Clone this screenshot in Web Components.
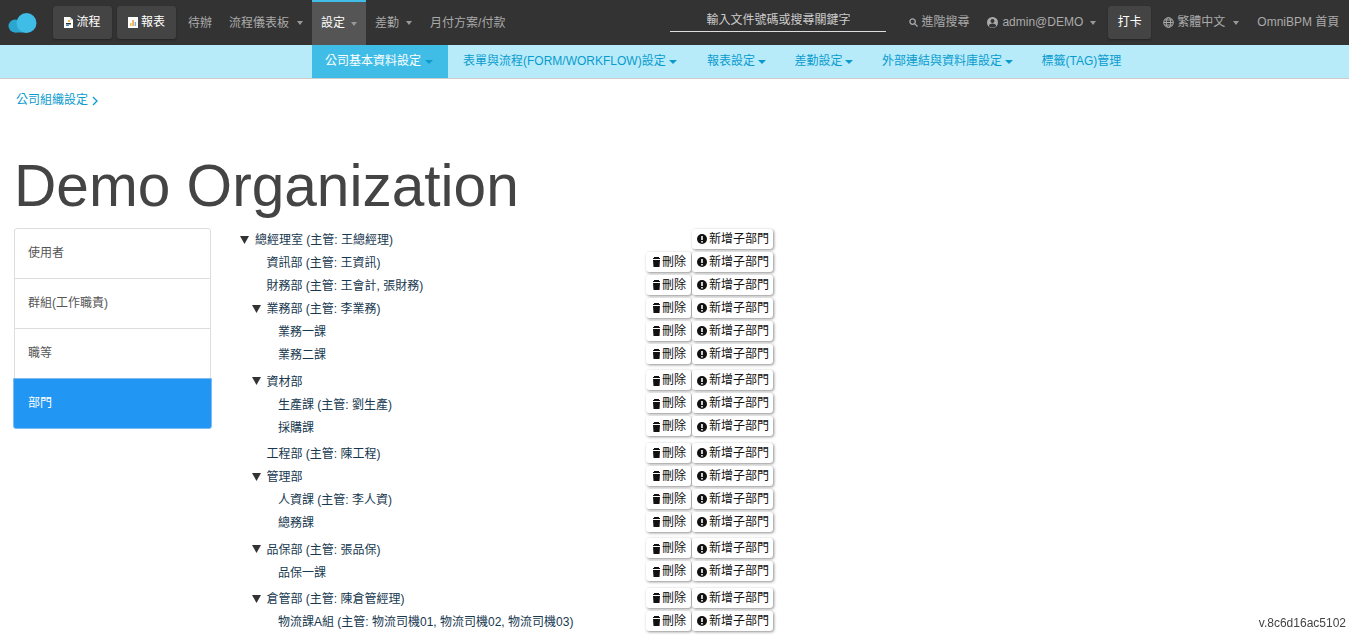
<!DOCTYPE html>
<html>
<head>
<meta charset="utf-8">
<title>Demo Organization</title>
<style>
    html, body { margin: 0; height: 637px; overflow: hidden; background: #fff; }
    body { font: 12px/1.4 "Liberation Sans", "Noto Sans CJK TC", sans-serif; color: #444; }
</style>
</head>
<body>

<app-navbar></app-navbar>
<app-subnav></app-subnav>
<page-header title-text="Demo Organization" crumb="公司組織設定"></page-header>

<div style="display:flex;padding-left:14px;gap:29px">
    <side-menu></side-menu>
    <org-tree>
        <org-group>
            <org-row caret nodelete>總經理室 (主管: 王總經理)</org-row>
            <org-group indent>
                <org-row>資訊部 (主管: 王資訊)</org-row>
                <org-row>財務部 (主管: 王會計, 張財務)</org-row>
                <org-group>
                    <org-row caret>業務部 (主管: 李業務)</org-row>
                    <org-group indent>
                        <org-row>業務一課</org-row>
                        <org-row>業務二課</org-row>
                    </org-group>
                </org-group>
                <org-group>
                    <org-row caret>資材部</org-row>
                    <org-group indent>
                        <org-row>生產課 (主管: 劉生產)</org-row>
                        <org-row>採購課</org-row>
                    </org-group>
                </org-group>
                <org-row>工程部 (主管: 陳工程)</org-row>
                <org-group>
                    <org-row caret>管理部</org-row>
                    <org-group indent>
                        <org-row>人資課 (主管: 李人資)</org-row>
                        <org-row>總務課</org-row>
                    </org-group>
                </org-group>
                <org-group>
                    <org-row caret>品保部 (主管: 張品保)</org-row>
                    <org-group indent>
                        <org-row>品保一課</org-row>
                    </org-group>
                </org-group>
                <org-group>
                    <org-row caret>倉管部 (主管: 陳倉管經理)</org-row>
                    <org-group indent>
                        <org-row>物流課A組 (主管: 物流司機01, 物流司機02, 物流司機03)</org-row>
                    </org-group>
                </org-group>
            </org-group>
        </org-group>
    </org-tree>
</div>

<version-tag>v.8c6d16ac5102</version-tag>

<script>
// 導覽列圖示
const ICONS = {
    cloud: `<svg width="29" height="20" viewBox="0 0 29 20"><circle cx="7" cy="13" r="6.500" fill="#2ba7cf"/><rect x="7" y="12" width="12" height="7.500" fill="#2ba7cf"/><circle cx="18.500" cy="10" r="10" fill="#3fbde6"/></svg>`,
    file: `<svg width="9" height="11" viewBox="0 0 9 11"><path d="M0 0h6l3 3v8H0z" fill="#fff"/><path d="M6 0l3 3H6z" fill="#cfd8dc"/><path d="M2 6h5v1.500H2z" fill="#333"/><path d="M4 3h2v2H4z" fill="#f5b83d"/><path d="M2 8h3v1H2z" fill="#2b8fd8"/></svg>`,
    chart: `<svg width="10" height="11" viewBox="0 0 10 11"><path d="M0 0h10v11H0z" fill="#fff"/><path d="M2 6h1.500v3H2z" fill="#f5b83d"/><path d="M4.300 3h1.500v6H4.300z" fill="#f09a3e"/><path d="M6.600 5h1.500v4H6.600z" fill="#7fb2dc"/></svg>`,
    search: `<svg width="9" height="9" viewBox="0 0 9 9" fill="none" stroke="#aaa" stroke-width="1.300"><circle cx="3.600" cy="3.600" r="2.700"/><path d="M5.600 5.600L8.500 8.500"/></svg>`,
    user: `<svg width="11" height="11" viewBox="0 0 11 11"><circle cx="5.500" cy="5.500" r="5.500" fill="#aaa"/><circle cx="5.500" cy="4" r="2" fill="#333"/><path d="M1.800 9c.6-1.800 2-2.500 3.700-2.500s3.100.7 3.700 2.500c-1 1-2.300 1.500-3.700 1.500S2.800 10 1.800 9z" fill="#333"/></svg>`,
    globe: `<svg width="11" height="11" viewBox="0 0 11 11" fill="none" stroke="#aaa" stroke-width="1"><circle cx="5.500" cy="5.500" r="4.800"/><ellipse cx="5.500" cy="5.500" rx="2.200" ry="4.800"/><path d="M.7 5.500h9.600M1.400 3h8.200M1.400 8h8.200"/></svg>`
};

class AppNavbar extends HTMLElement {
    constructor() {
        super();
        const shadow = this.attachShadow({mode: 'open'});
        shadow.innerHTML = `
            <style>
                :host { display: flex; align-items: stretch; height: 45px; background: #333; color: #aaa; font-size: 12px; white-space: nowrap; }
                .logo { display: flex; align-items: center; padding: 0 16px 0 8px; }
                .btn { flex: none; display: flex; align-items: center; justify-content: center; gap: 3px; box-sizing: border-box; width: 59px; height: 33px; margin-top: 6px; background: #444; color: #fff; border-radius: 3px; box-shadow: 0 1px 2px rgba(0,0,0,.3); }
                .btn + .btn { margin-left: 5px; }
                .item { display: flex; align-items: center; padding: 1px 9px 0; }
                .caret { display: inline-block; width: 0; height: 0; margin-left: 6px; border: 3.500px solid transparent; border-top: 4px solid #999; border-bottom: 0; }
                .active { background: #555; color: #fff; border-top: 2px solid #3fbde6; padding: 0 9px; }
                .search { width: 216px; height: 23px; margin: 9px 23px 0 156px; box-sizing: border-box; border-bottom: 1px solid #ddd; text-align: center; color: #ccc; line-height: 22px; }
                .gapped { gap: 3px; }
            </style>
            <div class="logo">${ICONS.cloud}</div>
            <div class="btn">${ICONS.file}<span>流程</span></div>
            <div class="btn">${ICONS.chart}<span>報表</span></div>
            <div class="item" style="margin-left:3px">待辦</div>
            <div class="item" style="margin-left:-1px">流程儀表板<i class="caret" style="margin-left:8px"></i></div>
            <div class="item active">設定<i class="caret"></i></div>
            <div class="item">差勤<i class="caret" style="margin-left:7px"></i></div>
            <div class="item">月付方案/付款</div>
            <div class="search">輸入文件號碼或搜尋關鍵字</div>
            <div class="item gapped" style="padding:1px 0">${ICONS.search}進階搜尋</div>
            <div class="item" style="gap:4px;padding:1px 12px 1px 18px">${ICONS.user}admin@DEMO<i class="caret" style="margin-left:3px"></i></div>
            <div class="btn" style="width:43px">打卡</div>
            <div class="item gapped" style="padding:1px 0 1px 12px">${ICONS.globe}繁體中文<i class="caret" style="margin-left:5px"></i></div>
            <div class="item" style="padding:1px 0 1px 18px">OmniBPM 首頁</div>
        `;
    }
}

class AppSubnav extends HTMLElement {
    constructor() {
        super();
        const shadow = this.attachShadow({mode: 'open'});
        const items = [
            ['公司基本資料設定', true],
            ['表單與流程(FORM/WORKFLOW)設定', true],
            ['報表設定', true],
            ['差勤設定', true],
            ['外部連結與資料庫設定', true],
            ['標籤(TAG)管理', false]
        ];
        shadow.innerHTML = `
            <style>
                :host { display: flex; height: 33px; padding-left: 312px; background: #b7ebfa; border-bottom: 1px solid #ccc; color: #0a9bce; font-size: 12px; }
                a { display: flex; align-items: center; padding: 0 14.250px; white-space: nowrap; }
                a:first-of-type { padding: 0 15px 0 13px; background: #3fbde6; color: #fff; }
                a:nth-of-type(2) { padding-left: 15px; padding-right: 16px; }
                .caret { display: inline-block; width: 0; height: 0; margin-left: 3px; border: 4px solid transparent; border-top: 4px solid currentColor; border-bottom: 0; }
                a:first-of-type .caret { color: #0a9bce; margin-left: 4px; }
            </style>
            ${items.map(([text, caret]) => `<a>${text}${caret ? '<i class="caret"></i>' : ''}</a>`).join('')}
        `;
    }
}

class PageHeader extends HTMLElement {
    constructor() {
        super();
        const shadow = this.attachShadow({mode: 'open'});
        shadow.innerHTML = `
            <style>
                :host { display: block; padding: 13px 14px 0; }
                .crumb { display: flex; align-items: center; gap: 4px; padding-left: 2px; height: 17px; color: #0a9bce; font-size: 12px; }
                h1 { margin: 41px 0 0; font-size: 58.600px; line-height: 72px; font-weight: 400; color: #444; height: 78px; white-space: nowrap; }
            </style>
            <div class="crumb"><span></span><svg width="6" height="10" viewBox="0 0 6 10" fill="none" stroke="#0a9bce" stroke-width="1.300"><path d="M1 1l4 4-4 4"/></svg></div>
            <h1></h1>
        `;
        shadow.querySelector('span').textContent = this.getAttribute('crumb');
        shadow.querySelector('h1').textContent = this.getAttribute('title-text');
    }
}

class SideMenu extends HTMLElement {
    constructor() {
        super();
        const shadow = this.attachShadow({mode: 'open'});
        const items = ['使用者', '群組(工作職責)', '職等', '部門'];
        shadow.innerHTML = `
            <style>
                :host { display: block; flex: none; width: 197px; font-size: 12px; color: #555; }
                div { box-sizing: border-box; height: 51px; padding: 0 13px; display: flex; align-items: center; background: #fff; border: 1px solid #ddd; margin-bottom: -1px; }
                div:first-of-type { border-radius: 3px 3px 0 0; }
                div.active { position: relative; margin: 0 -1px; padding: 0 14px; background: #2196f3; border-color: #7cbcf5; color: #fff; border-radius: 0 0 3px 3px; }
            </style>
            ${items.map((t, i) => `<div class="${i === 3 ? 'active' : ''}">${t}</div>`).join('')}
        `;
    }
}

class OrgTree extends HTMLElement {
    constructor() {
        super();
        const shadow = this.attachShadow({mode: 'open'});
        shadow.innerHTML = `
            <style>
                :host { display: block; width: 533px; font-size: 12px; color: #17384f; }
            </style>
            <slot></slot>
        `;
    }
}

class OrgGroup extends HTMLElement {
    constructor() {
        super();
        const shadow = this.attachShadow({mode: 'open'});
        shadow.innerHTML = `
            <style>
                :host { display: block; }
                :host([indent]) { padding-left: 11.500px; }
                :host(:not([indent])) { margin-bottom: 3.500px; }
            </style>
            <slot></slot>
        `;
    }
}

class OrgRow extends HTMLElement {
    constructor() {
        super();
        const shadow = this.attachShadow({mode: 'open'});
        const hasCaret = this.hasAttribute('caret');
        const noDelete = this.hasAttribute('nodelete');
        shadow.innerHTML = `
            <style>
                :host { display: flex; align-items: center; height: 23px; white-space: nowrap; }
                .caret { flex: none; width: 15px; height: 23px; display: flex; align-items: center; }
                .name { flex: 1; margin-top: 2px; }
                .caret svg { display: block; }
            </style>
            <span class="caret">${hasCaret ? '<svg width="9" height="8" viewBox="0 0 9 8"><path d="M0 0h9L4.500 8z" fill="#333"/></svg>' : ''}</span>
            <span class="name"><slot></slot></span>
            ${noDelete ? '' : '<org-button icon="trash">刪除</org-button>'}
            <org-button icon="info">新增子部門</org-button>
        `;
    }
}

class OrgButton extends HTMLElement {
    constructor() {
        super();
        const shadow = this.attachShadow({mode: 'open'});
        const trash = `<svg width="8" height="10" viewBox="0 0 8 10"><path d="M2 0h5v1h1v1H1V1h1zM1 3h7l-.5 7h-6z" fill="#111"/></svg>`;
        const info = `<svg width="10" height="10" viewBox="0 0 10 10"><circle cx="5" cy="5" r="5" fill="#111"/><path d="M4.200 2h1.600v4H4.200zM4.200 7h1.600v1.500H4.200z" fill="#fff"/></svg>`;
        shadow.innerHTML = `
            <style>
                :host { display: flex; align-items: center; gap: 2px; box-sizing: border-box; flex: none; height: 20px; margin: -2px 0 0 1px; padding: 1px 4px 0 5px; background: #fff; color: #111; border-radius: 3px; box-shadow: 1px 1px 3px rgba(0,0,0,.45); }
                :host([icon="trash"]) { padding: 1px 5px 0 6px; }
            </style>
            ${this.getAttribute('icon') === 'trash' ? trash : info}<slot></slot>
        `;
    }
}

class VersionTag extends HTMLElement {
    constructor() {
        super();
        const shadow = this.attachShadow({mode: 'open'});
        shadow.innerHTML = `
            <style>
                :host { display: block; position: fixed; right: 3px; top: 615px; font-size: 12px; color: #444; background: #fff; }
            </style>
            <slot></slot>
        `;
    }
}

customElements.define('app-navbar', AppNavbar);
customElements.define('app-subnav', AppSubnav);
customElements.define('page-header', PageHeader);
customElements.define('side-menu', SideMenu);
customElements.define('org-tree', OrgTree);
customElements.define('org-group', OrgGroup);
customElements.define('org-row', OrgRow);
customElements.define('org-button', OrgButton);
customElements.define('version-tag', VersionTag);
</script>
</body>
</html>
